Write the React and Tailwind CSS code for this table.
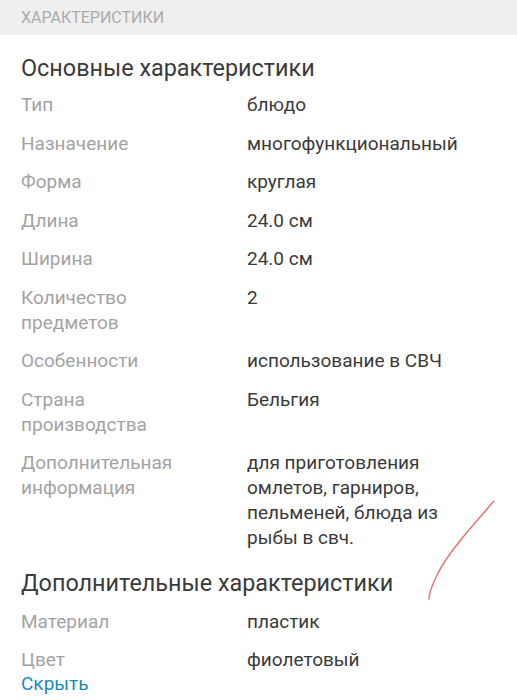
const MAIN = [
  ["Тип", "блюдо"],
  ["Назначение", "многофункциональный"],
  ["Форма", "круглая"],
  ["Длина", "24.0 см"],
  ["Ширина", "24.0 см"],
  ["Количество предметов", "2"],
  ["Особенности", "использование в СВЧ"],
  ["Страна производства", "Бельгия"],
  [
    "Дополнительная информация",
    "для приготовления омлетов, гарниров, пельменей, блюда из рыбы в свч.",
  ],
];

const EXTRA = [
  ["Материал", "пластик"],
  ["Цвет", "фиолетовый"],
];

function Row({ label, value }) {
  return (
    <div className="flex text-[19px] leading-[25px]">
      <div className="w-[226px] shrink-0 pr-[46px] text-[#a3a3a3]">{label}</div>
      <div className="w-[230px] text-[#3a3a3a]">{value}</div>
    </div>
  );
}

export default function App() {
  return (
    <div
      className="relative w-[517px] h-[700px] overflow-hidden bg-white"
      style={{ fontFamily: "Roboto, 'Noto Sans', sans-serif" }}
    >
      {/* HEADER */}
      <div className="h-[35px] bg-[#efefef] px-[21px] flex items-center">
        <span className="text-[16px] text-[#ababab]">ХАРАКТЕРИСТИКИ</span>
      </div>

      <div className="px-[21px]">
        <h2 className="mt-[19px] text-[23.4px] leading-[28px] text-[#3a3a3a]">
          Основные характеристики
        </h2>
        <div className="mt-[10px] flex flex-col gap-[13.5px]">
          {MAIN.map(([l, v]) => (
            <Row key={l} label={l} value={v} />
          ))}
        </div>

        <h2 className="mt-[19px] text-[23.4px] leading-[28px] text-[#3a3a3a]">
          Дополнительные характеристики
        </h2>
        <div className="mt-[11.5px] flex flex-col gap-[13.5px]">
          {EXTRA.map(([l, v]) => (
            <Row key={l} label={l} value={v} />
          ))}
        </div>
        <div className="text-[19px] leading-[24px] text-[#1b8bbd]">Скрыть</div>
      </div>

      {/* pen mark */}
      <svg className="absolute left-[420px] top-[495px]" width="80" height="110" viewBox="0 0 80 110">
        <path
          d="M74 6 C 55 28, 30 55, 18 78 C 12 90, 9 98, 9 104"
          fill="none"
          stroke="#e07a7e"
          strokeWidth="1.6"
          strokeLinecap="round"
        />
      </svg>
    </div>
  );
}
